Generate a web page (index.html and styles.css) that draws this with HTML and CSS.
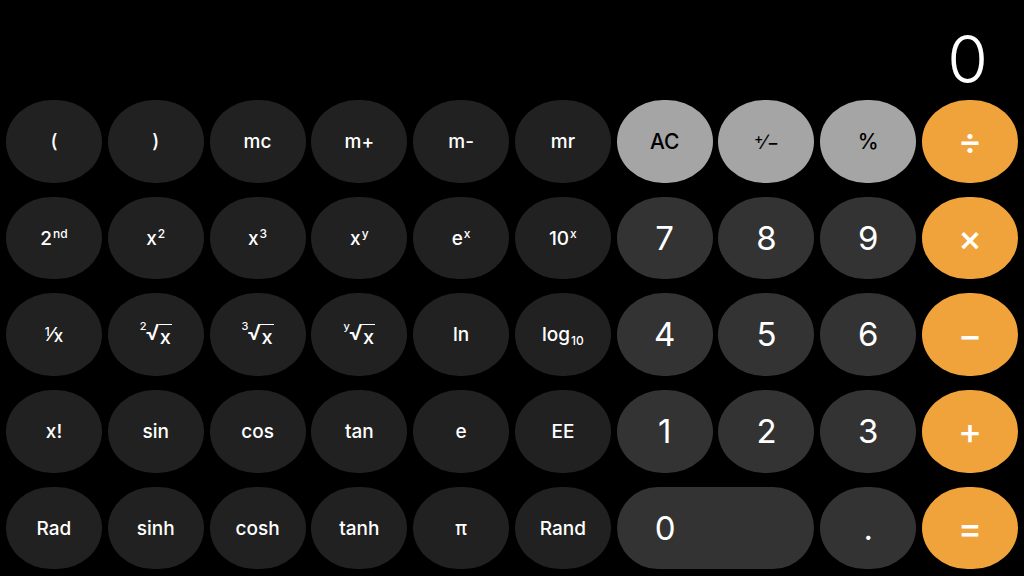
FILE: index.html
```html
<!DOCTYPE html>
<html lang="en">
<head>
<meta charset="utf-8">
<title>Calculator</title>
<link rel="stylesheet" href="styles.css">
</head>
<body>
<div class="calc">
  <div class="display"><span class="value">0</span></div>
  <div class="keys">
    <button class="key fn">(</button>
    <button class="key fn">)</button>
    <button class="key fn">mc</button>
    <button class="key fn">m+</button>
    <button class="key fn">m-</button>
    <button class="key fn">mr</button>
    <button class="key light">AC</button>
    <button class="key light"><span class="pm"><sup>+</sup>∕<sub>−</sub></span></button>
    <button class="key light">%</button>
    <button class="key op">÷</button>

    <button class="key fn"><span>2<sup class="sp">nd</sup></span></button>
    <button class="key fn"><span>x<sup class="sp">2</sup></span></button>
    <button class="key fn"><span>x<sup class="sp">3</sup></span></button>
    <button class="key fn"><span>x<sup class="sp">y</sup></span></button>
    <button class="key fn"><span>e<sup class="sp">x</sup></span></button>
    <button class="key fn"><span>10<sup class="sp">x</sup></span></button>
    <button class="key num">7</button>
    <button class="key num">8</button>
    <button class="key num">9</button>
    <button class="key op">×</button>

    <button class="key fn"><span class="frac"><sup>1</sup>⁄<sub>x</sub></span></button>
    <button class="key fn"><span class="root"><sup>2</sup><span class="rad">√</span><span class="rx">x</span></span></button>
    <button class="key fn"><span class="root"><sup>3</sup><span class="rad">√</span><span class="rx">x</span></span></button>
    <button class="key fn"><span class="root"><sup>y</sup><span class="rad">√</span><span class="rx">x</span></span></button>
    <button class="key fn">ln</button>
    <button class="key fn"><span class="log">log<sub class="lsub">10</sub></span></button>
    <button class="key num">4</button>
    <button class="key num">5</button>
    <button class="key num">6</button>
    <button class="key op">−</button>

    <button class="key fn">x!</button>
    <button class="key fn">sin</button>
    <button class="key fn">cos</button>
    <button class="key fn">tan</button>
    <button class="key fn">e</button>
    <button class="key fn">EE</button>
    <button class="key num">1</button>
    <button class="key num">2</button>
    <button class="key num">3</button>
    <button class="key op">+</button>

    <button class="key fn">Rad</button>
    <button class="key fn">sinh</button>
    <button class="key fn">cosh</button>
    <button class="key fn">tanh</button>
    <button class="key fn">π</button>
    <button class="key fn">Rand</button>
    <button class="key num zero">0</button>
    <button class="key num">.</button>
    <button class="key op">=</button>
  </div>
</div>
</body>
</html>
```

FILE: styles.css
```css
* { box-sizing: border-box; }
html, body {
  margin: 0;
  padding: 0;
  background: #000;
  width: 1024px;
  height: 576px;
  overflow: hidden;
}
.calc {
  display: flex;
  flex-direction: column;
  height: 576px;
  font-family: "Inter", "Roboto", "Liberation Sans", sans-serif;
  color: #fff;
}
.display {
  height: 100px;
  display: flex;
  justify-content: flex-end;
  align-items: flex-end;
  padding: 0 36px 8px 0;
}
.value {
  font-size: 66px;
  font-weight: 300;
  line-height: 1;
}
.keys {
  flex: 1;
  display: grid;
  grid-template-columns: repeat(10, 1fr);
  grid-template-rows: repeat(5, 1fr);
  column-gap: 5.8px;
  row-gap: 14px;
  padding: 0 6px 6.5px 6px;
}
.key {
  border: none;
  margin: 0;
  padding: 0;
  border-radius: 46px / 41.5px;
  font-family: inherit;
  font-size: 19px;
  font-weight: 450;
  color: #fff;
  display: flex;
  align-items: center;
  justify-content: center;
  line-height: 1;
}
.fn { background: #212121; }
.num { background: #333333; font-size: 33px; font-weight: 400; }
.light { background: #a5a5a5; color: #000; font-size: 21px; }
.op { background: #f1a33b; font-size: 36px; font-weight: 500; }
.zero {
  grid-column: span 2;
  border-radius: 42px;
  justify-content: flex-start;
  padding-left: 38px;
}
sup, sub { line-height: 0; }
.sp {
  font-size: 12px;
  vertical-align: 7px;
  margin-left: 1px;
}
.log { line-height: 1; }
.lsub {
  font-size: 12px;
  vertical-align: -4px;
  margin-left: 1px;
}
.frac { font-size: 19px; }
.frac sup { font-size: 12px; vertical-align: 5px; }
.frac sub { font-size: 17px; vertical-align: -1px; }
.pm { font-size: 21px; }
.pm sup { font-size: 14px; vertical-align: 5px; }
.pm sub { font-size: 18px; vertical-align: 0; }
.root {
  display: inline-flex;
  align-items: flex-start;
  font-size: 20px;
}
.root sup {
  font-size: 11px;
  line-height: 1;
  position: relative;
  top: -2px;
  margin-right: -1px;
}
.root .rad {
  font-size: 22px;
  line-height: 1;
  position: relative;
  top: -2px;
}
.root .rx {
  border-top: 1.5px solid #fff;
  line-height: 1;
  padding: 2px 1px 0 1px;
  margin-left: -1px;
  position: relative;
  top: 1px;
}
```
